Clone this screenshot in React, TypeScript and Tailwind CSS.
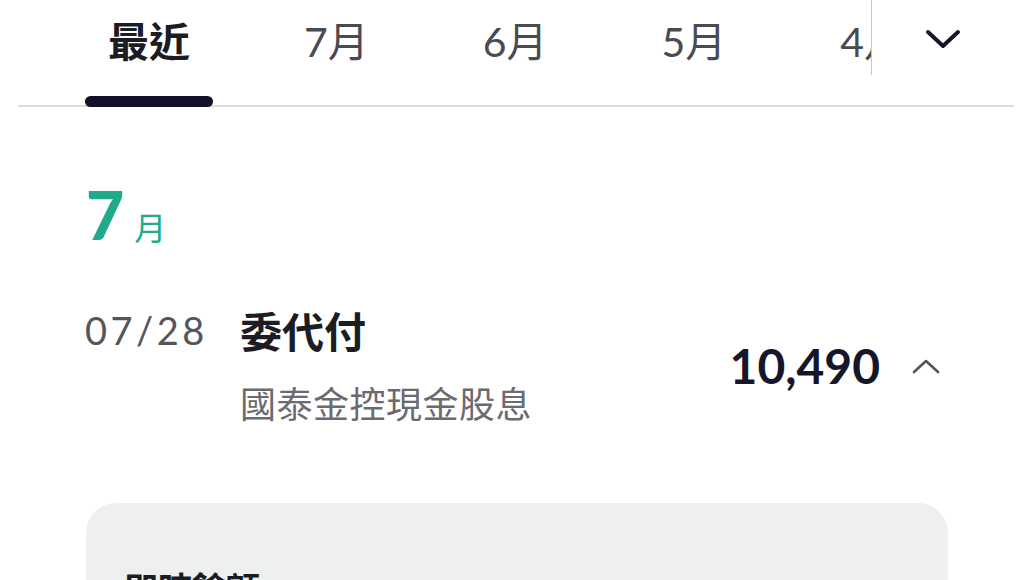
const tabs = ["最近", "7月", "6月", "5月", "4月", "3月"];

const font = {
  fontFamily: '"Lato", "Noto Sans CJK TC", sans-serif',
};

function ChevronDown() {
  return (
    <svg width="36" height="20" viewBox="0 0 36 20" fill="none">
      <path d="M3 3l15 14L33 3" stroke="#16162a" strokeWidth="4" strokeLinecap="round" strokeLinejoin="round" />
    </svg>
  );
}

function ChevronUp() {
  return (
    <svg width="28" height="16" viewBox="0 0 28 16" fill="none">
      <path d="M2 14L14 3l12 11" stroke="#555" strokeWidth="2.6" strokeLinecap="round" strokeLinejoin="round" />
    </svg>
  );
}

export default function App() {
  return (
    <div className="h-[580px] w-[1024px] overflow-hidden bg-white" style={font}>
      {/* month tabs */}
      <div className="ml-[18px] mr-[10px] flex h-[107px] border-b-2 border-[#dcdcdc]">
        <div className="mb-[30px] flex w-[854px] gap-[68px] overflow-hidden border-r border-[#c8c8c8] pl-[67px]">
          {tabs.map((t, i) => (
            <div key={t} className="flex h-[77px] shrink-0 px-[23px]">
              <span
                className={
                  "pt-[17px] text-[41px] leading-[50px] " +
                  (i === 0 ? "font-bold text-[#1c1c24]" : "text-[#4a4a52]")
                }
              >
                {t}
              </span>
            </div>
          ))}
        </div>
        <div className="flex flex-1 justify-center pt-[29px]">
          <ChevronDown />
        </div>
      </div>
      <div className="relative mx-[18px] h-0">
        <div className="absolute left-[67px] top-[-11px] h-[11px] w-[128px] rounded-full bg-[#12112a]" />
      </div>

      {/* month heading */}
      <div className="flex items-baseline gap-[10px] pl-[86px] pt-[76px]">
        <span className="text-[66px] font-black leading-[64px] text-[#20a98a]">7</span>
        <span className="text-[32px] leading-[32px] text-[#20a98a]">月</span>
      </div>

      {/* transaction row */}
      <div className="flex items-start pl-[85px] pr-[84px] pt-[60px]">
        <span className="w-[155px] shrink-0 text-[38px] leading-[46px] tracking-[3.5px] text-[#55555c]">07/28</span>
        <div className="flex flex-col">
          <span className="text-[42px] font-bold leading-[50px] text-[#1c1c24]">委代付</span>
          <span className="pt-[24px] text-[36px] leading-[46px] tracking-[0.5px] text-[#6a6a70]">國泰金控現金股息</span>
        </div>
        <div className="ml-auto flex items-center gap-[32px] pt-[30px]">
          <span className="text-[48px] font-bold leading-[58px] text-[#16162a]">10,490</span>
          <ChevronUp />
        </div>
      </div>

      {/* balance card */}
      <div className="ml-[86px] mr-[76px] mt-[76px] h-[200px] rounded-[30px] bg-[#eeefef] px-[38px] pt-[64px]">
        <span className="text-[34px] font-bold leading-[44px] text-[#1c1c24]">即時餘額</span>
      </div>
    </div>
  );
}
